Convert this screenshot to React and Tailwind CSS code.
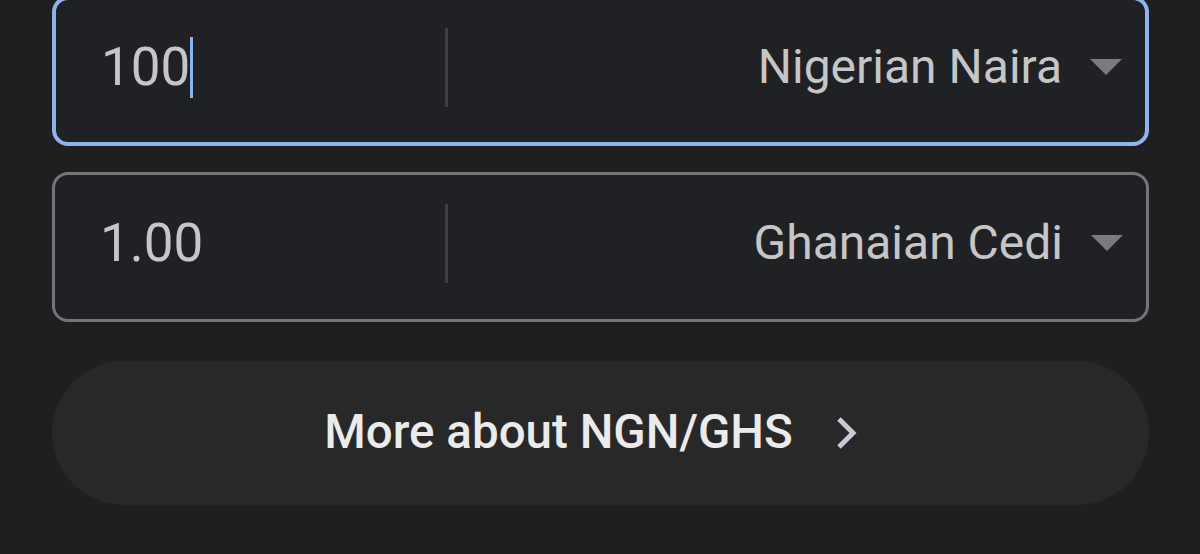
import React from "react";

function Caret() {
  return (
    <svg width="34" height="18" viewBox="0 0 34 18" className="shrink-0 blur-[0.6px]">
      <path d="M1 1 L33 1 L17 17 Z" fill="#7b7b7b" />
    </svg>
  );
}

function CurrencyRow({ value, currency, focused }) {
  return (
    <div
      className={
        "flex h-[150px] items-center rounded-[16px] bg-[#202124] pb-[8px] " +
        (focused ? "border-[4px] border-[#8fb3ee]" : "border-[3px] border-[#747578]")
      }
    >
      <div className={"flex items-center pl-[45px] " + (focused ? "w-[389px]" : "w-[390px]")}>
        <span
          className="text-[53px] leading-none text-[#c6c6c6]"
          style={{ fontFamily: "Roboto, 'Noto Sans', sans-serif" }}
        >
          {value}
        </span>
        {focused && <span className="h-[61px] w-[3px] bg-[#8ab4f8]" />}
      </div>
      <div className="h-[79px] w-[3px] bg-[#3e3f43]" />
      <div className="flex flex-1 items-center justify-end gap-[27px] pr-[22px]">
        <span
          className="text-[48px] leading-none text-[#c6c6c6]"
          style={{ fontFamily: "Roboto, 'Noto Sans', sans-serif" }}
        >
          {currency}
        </span>
        <Caret />
      </div>
    </div>
  );
}

export default function App() {
  return (
    <div className="h-[554px] w-full overflow-hidden bg-[#1f1f1f]">
      <div className="mt-[-4px] flex flex-col pl-[52px] pr-[51px]">
        <CurrencyRow value="100" currency="Nigerian Naira" focused />
        <div className="h-[26px]" />
        <CurrencyRow value="1.00" currency="Ghanaian Cedi" />
        <button className="mt-[39px] flex h-[144px] w-full items-center justify-center gap-[42px] rounded-full bg-[#282828] pr-[18px]">
          <span
            className="text-[47.5px] font-medium leading-none text-[#ebebeb]"
            style={{ fontFamily: "Roboto, 'Noto Sans', sans-serif" }}
          >
            More about NGN/GHS
          </span>
          <svg width="24" height="34" viewBox="0 0 24 34" className="shrink-0">
            <path d="M4 3 L18 17 L4 31" fill="none" stroke="#c9cad6" strokeWidth="5" />
          </svg>
        </button>
      </div>
    </div>
  );
}
